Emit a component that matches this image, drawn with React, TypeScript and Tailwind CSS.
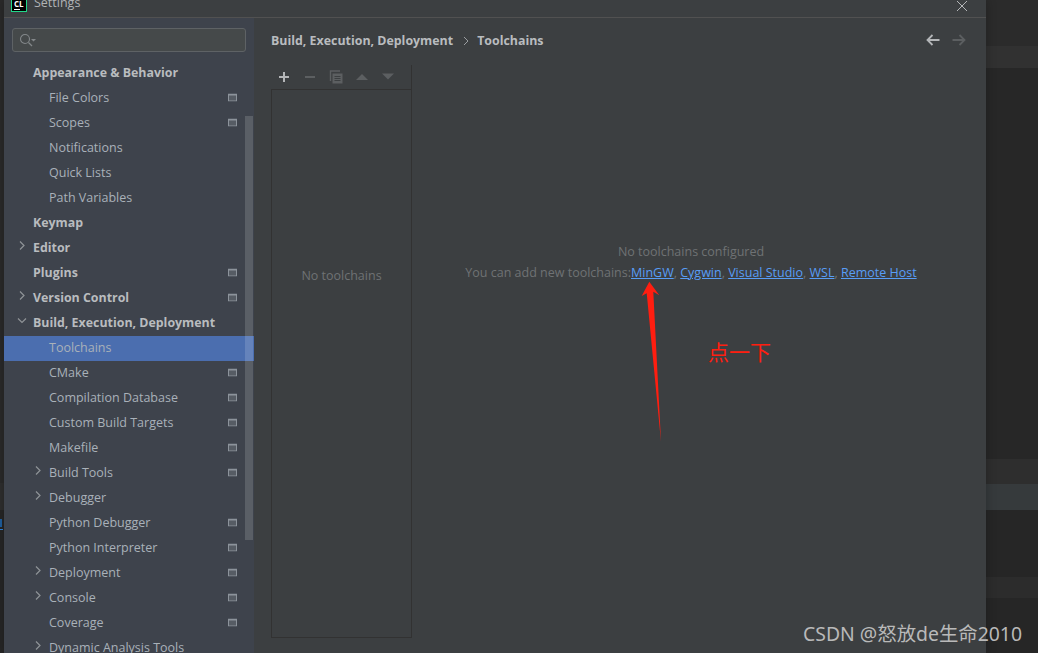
const rows = [
  { label: "Appearance & Behavior", bold: true },
  { label: "File Colors", indent: true, badge: true },
  { label: "Scopes", indent: true, badge: true },
  { label: "Notifications", indent: true },
  { label: "Quick Lists", indent: true },
  { label: "Path Variables", indent: true },
  { label: "Keymap", bold: true },
  { label: "Editor", bold: true, arrow: "right" },
  { label: "Plugins", bold: true, badge: true },
  { label: "Version Control", bold: true, arrow: "right", badge: true },
  { label: "Build, Execution, Deployment", bold: true, arrow: "down" },
  { label: "Toolchains", indent: true, active: true },
  { label: "CMake", indent: true, badge: true },
  { label: "Compilation Database", indent: true, badge: true },
  { label: "Custom Build Targets", indent: true, badge: true },
  { label: "Makefile", indent: true, badge: true },
  { label: "Build Tools", indent: true, arrow: "right", badge: true },
  { label: "Debugger", indent: true, arrow: "right" },
  { label: "Python Debugger", indent: true, badge: true },
  { label: "Python Interpreter", indent: true, badge: true },
  { label: "Deployment", indent: true, arrow: "right", badge: true },
  { label: "Console", indent: true, arrow: "right", badge: true },
  { label: "Coverage", indent: true, badge: true },
  { label: "Dynamic Analysis Tools", indent: true, arrow: "right" },
];

function Badge() {
  return (
    <svg width="9" height="8" viewBox="0 0 9 8" className="shrink-0 -translate-y-[1.5px]">
      <rect x="0" y="0" width="9" height="8" fill="#8c939b" />
      <rect x="1" y="2" width="7" height="5" fill="#565c64" />
    </svg>
  );
}

function Chevron({ dir }: { dir: string }) {
  return (
    <svg width="10" height="10" viewBox="0 0 10 10" className="absolute top-[2px] -left-[16px]">
      <path
        d={dir === "down" ? "M1 3l4 4 4-4" : "M3 1l4 4-4 4"}
        fill="none"
        stroke="#8f9397"
        strokeWidth="1.2"
      />
    </svg>
  );
}

function SideRow({ row }: { row: (typeof rows)[number] }) {
  return (
    <div
      className={`flex h-[25px] items-center pr-[17px] ${row.indent ? "pl-[45px]" : "pl-[29px]"} ${
        row.active ? "bg-[#4b6eaf]" : ""
      }`}
    >
      <div className="relative flex-1 -translate-y-[1.5px]">
        {row.arrow && <Chevron dir={row.arrow} />}
        <span
          className={`block leading-[18px] whitespace-nowrap ${
            row.bold ? "text-[12.4px] font-bold text-[#b9bcbf]" : "text-[12.5px] text-[#a9b1b9]"
          }`}
        >
          {row.label}
        </span>
      </div>
      {row.badge && <Badge />}
    </div>
  );
}

function Sidebar() {
  return (
    <aside className="relative h-full w-[250px] shrink-0 overflow-hidden bg-[#3e434c]">
      <div className="px-2 pt-[10px]">
        <div className="flex h-[24px] items-center rounded-[3px] border border-[#5e6265] bg-[#45494a] pl-[5px]">
          <svg width="20" height="16" viewBox="0 0 20 16">
            <circle cx="7" cy="7" r="4.5" fill="none" stroke="#83878a" strokeWidth="1.1" />
            <path d="M10.5 10.5l3.5 3.5" stroke="#83878a" strokeWidth="1.2" />
            <path d="M13 7h5l-2.5 2.5z" fill="#83878a" />
          </svg>
        </div>
      </div>
      <div className="mt-[9px]">
        {rows.map((row) => (
          <SideRow key={row.label} row={row} />
        ))}
      </div>
      {/* overlay scrollbar */}
      <div className="absolute top-[98px] right-px h-[424px] w-2 bg-white/15" />
    </aside>
  );
}

function ToolbarIcons() {
  return (
    <div className="flex h-[24px] items-center gap-[10px] pl-[5px]">
      <svg width="16" height="16" viewBox="0 0 16 16">
        <path d="M8 3v10M3 8h10" stroke="#b4b6b8" strokeWidth="2" />
      </svg>
      <svg width="16" height="16" viewBox="0 0 16 16">
        <path d="M3 8h10" stroke="#5c5f61" strokeWidth="2" />
      </svg>
      <svg width="16" height="16" viewBox="0 0 16 16" fill="none" stroke="#5c5f61">
        <path d="M12 2H2.5v10" strokeWidth="1.4" />
        <path d="M4.5 4.500h10v10h-10z" fill="#5c5f61" strokeWidth="0" />
        <path d="M6.500 7.500h6M6.500 9.500h6M6.500 11.500h6" stroke="#3c3f41" strokeWidth="1" />
      </svg>
      <svg width="16" height="16" viewBox="0 0 16 16">
        <path d="M2 11L8 5l6 6z" fill="#5c5f61" />
      </svg>
      <svg width="16" height="16" viewBox="0 0 16 16">
        <path d="M2 4.500h12l-6 6z" fill="#5c5f61" />
      </svg>
    </div>
  );
}

function Main() {
  return (
    <main className="flex h-full flex-1 flex-col bg-[#3c3f41] pr-4 pb-[15px] pl-[17px]">
      <div className="flex h-[47px] shrink-0 items-start pt-[14px]">
        <span className="text-[12.4px] leading-[18px] font-bold text-[#b9bcbf]">Build, Execution, Deployment</span>
        <svg width="8" height="10" viewBox="0 0 8 10" className="mt-1 mr-[7px] ml-[9px]">
          <path d="M2 1l4 4-4 4" fill="none" stroke="#9a9da0" strokeWidth="1" />
        </svg>
        <span className="text-[12.4px] leading-[18px] font-bold text-[#b9bcbf]">Toolchains</span>
        <div className="ml-auto flex items-center gap-[12px] pr-[4px]">
          <svg width="14" height="14" viewBox="0 0 14 14" className="mt-[1px]">
            <path d="M13.5 7H2M6.5 2L1.5 7l5 5" fill="none" stroke="#b4b6b8" strokeWidth="1.8" />
          </svg>
          <svg width="14" height="14" viewBox="0 0 14 14" className="mt-[1px]">
            <path d="M.5 7H12M7.5 2l5 5-5 5" fill="none" stroke="#5c5f61" strokeWidth="1.8" />
          </svg>
        </div>
      </div>
      <div className="flex min-h-0 flex-1">
        <div className="flex w-[141px] shrink-0 flex-col border-r border-[#323232]">
          <ToolbarIcons />
          <div className="flex-1 border-y border-l border-[#323232] pt-[177px] text-center text-[12.5px] leading-[18px] text-[#6f7274]">
            No toolchains
          </div>
        </div>
        <div className="flex-1 pt-[176px] text-center text-[12.5px] leading-[21px] text-[#6f7274]">
          <div>No toolchains configured</div>
          <div>
            You can add new toolchains:
            <a className="text-[#589df6] underline">MinGW</a>, <a className="text-[#589df6] underline">Cygwin</a>,{" "}
            <a className="text-[#589df6] underline">Visual Studio</a>, <a className="text-[#589df6] underline">WSL</a>,{" "}
            <a className="text-[#589df6] underline">Remote Host</a>
          </div>
        </div>
      </div>
    </main>
  );
}

export default function App() {
  return (
    <div
      className="relative flex h-[653px] w-[1038px] overflow-hidden bg-[#262626]"
      style={{ fontFamily: '"Open Sans", "Noto Sans", sans-serif' }}
    >
      {/* editor behind the dialog, left edge */}
      <div className="flex w-[4px] shrink-0 flex-col">
        <div className="h-[483px] bg-[#2a2a2a]" />
        <div className="h-[27px] bg-[#2e2e2e]" />
        <div className="mt-[9px] h-[8px] w-[2px] bg-[#1f5f9f]" />
        <div className="mt-[2px] h-px w-[3px] bg-[#2f86e0]" />
      </div>
      <div className="relative z-10 flex h-full w-[982px] shrink-0 flex-col shadow-[0_0_10px_rgba(0,0,0,0.25)]">
        {/* title bar, cut off at the top of the shot */}
        <header className="flex h-[18px] shrink-0 items-end justify-between overflow-hidden border-b border-[#515151] bg-[#3c3f41] pr-[18px] pb-[5px] pl-[7px]">
          <div className="flex items-end gap-[7px]">
            <div className="flex h-[16px] w-[16px] flex-col justify-end border border-[#21d789] bg-black px-[2px] pb-px">
              <span className="text-[8px] leading-[8px] font-bold text-white">CL</span>
              <span className="mt-px h-px w-[6px] bg-white" />
            </div>
            <span className="text-[12.5px] leading-[18px] text-[#b0b3b5]">Settings</span>
          </div>
          <svg width="12" height="12" viewBox="0 0 12 12">
            <path d="M1 1l10 10M11 1L1 11" stroke="#b4b6b8" strokeWidth="1" />
          </svg>
        </header>
        <div className="flex min-h-0 flex-1">
          <Sidebar />
          <Main />
        </div>
      </div>
      {/* editor behind the dialog, right edge */}
      <div className="flex min-w-0 flex-1 flex-col">
        <div className="h-[46px] bg-[#2b2b2b]" />
        <div className="h-[22px] bg-[#313131]" />
        <div className="h-[391px] bg-[#272727]" />
        <div className="h-[25px] bg-[#2e2e2e]" />
        <div className="h-[26px] bg-[#363a3c]" />
        <div className="h-[67px] bg-[#262626]" />
        <div className="h-[21px] bg-[#2c2c2c]" />
      </div>

      {/* annotation */}
      <svg width="24" height="164" viewBox="0 0 24 164" className="absolute top-[280px] left-[640px] z-20">
        <path d="M9.3 1.700L1.700 16l5-2.700L21 161.700 13.300 11.700l6 3.600z" fill="#ff1e10" />
      </svg>
      <span
        className="absolute top-[337px] left-[708px] z-20 text-[21px] leading-[28px] text-[#ff1e10]"
        style={{ fontFamily: '"Noto Sans CJK SC", sans-serif' }}
      >
        点一下
      </span>
      <span
        className="absolute top-[620px] left-[803px] z-20 text-[19.4px] leading-[28px] whitespace-nowrap text-[#b9b9b9]"
        style={{ fontFamily: '"Noto Sans", "Noto Sans CJK SC", sans-serif' }}
      >
        CSDN @怒放de生命2010
      </span>
    </div>
  );
}
